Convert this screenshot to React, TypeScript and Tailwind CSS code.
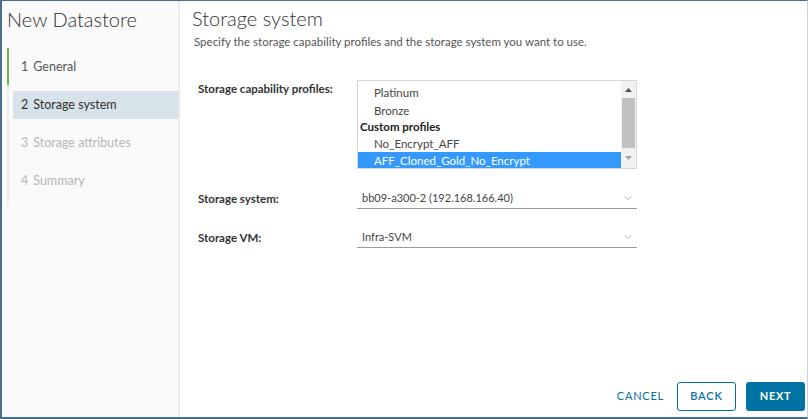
import { ChevronDown } from 'lucide-react';

const STEPS = [
  { n: 1, label: 'General', state: 'done' },
  { n: 2, label: 'Storage system', state: 'active' },
  { n: 3, label: 'Storage attributes', state: 'todo' },
  { n: 4, label: 'Summary', state: 'todo' },
];

function StepList() {
  return (
    <div className="mt-[16px] flex">
      <div className="ml-[5px] flex w-[2px] flex-col bg-[#ececec]">
        <div className="h-[37px] bg-[#6db33f]" />
        <div className="h-[111px]" />
      </div>
      <div className="ml-[4px] flex flex-1 flex-col pt-[5px]">
        {STEPS.map((s) => (
          <div
            key={s.n}
            className={
              s.state === 'active'
                ? 'mb-[10px] flex h-[28px] items-center bg-[#d8e3e9] pl-[8px] text-[#313131]'
                : s.state === 'done'
                  ? 'mb-[10px] flex h-[28px] items-center pl-[8px] text-[#565656]'
                  : 'mb-[10px] flex h-[28px] items-center pl-[8px] text-[#b6b6b6]'
            }
          >
            <span className="mr-[5px]">{s.n}</span>
            <span>{s.label}</span>
          </div>
        ))}
      </div>
    </div>
  );
}

function ProfilesList() {
  return (
    <div className="flex h-[89px] w-[280px] border border-[#d7d7d7] bg-white text-[11.5px]">
      <div className="flex flex-1 flex-col overflow-hidden">
        <div className="-mt-[14px] flex flex-col">
          <div className="h-[17px] pl-[16px] leading-[17px]">Gold</div>
          <div className="h-[18px] pl-[16px] leading-[18px]">Platinum</div>
          <div className="h-[17px] pl-[16px] leading-[17px]">Bronze</div>
          <div className="h-[16px] pl-[2px] font-bold leading-[16px] text-[#222]">Custom profiles</div>
          <div className="h-[17px] pl-[16px] leading-[17px]">No_Encrypt_AFF</div>
          <div className="h-[17px] bg-[#3399ff] pl-[16px] leading-[17px] text-white">
            AFF_Cloned_Gold_No_Encrypt
          </div>
        </div>
      </div>
      <div className="flex w-[15px] flex-col bg-[#f1f1f1]">
        <div className="flex h-[17px] items-center justify-center">
          <svg width="7" height="4" viewBox="0 0 7 4"><path d="M0 4 L3.5 0 L7 4Z" fill="#505050" /></svg>
        </div>
        <div className="mx-[1px] h-[50px] bg-[#c1c1c1]" />
        <div className="flex flex-1 items-center justify-center">
          <svg width="7" height="4" viewBox="0 0 7 4"><path d="M0 0 L3.5 4 L7 0Z" fill="#a3a3a3" /></svg>
        </div>
      </div>
    </div>
  );
}

function SelectRow({ label, value }: { label: string; value: string }) {
  return (
    <div className="flex items-center">
      <div className="w-[165px] pl-[6px] text-[11.5px] font-bold text-[#333]">{label}</div>
      <div className="flex h-[22px] w-[280px] items-center justify-between border-b border-[#9a9a9a] pl-[5px] pr-[3px] text-[#454545]">
        <span>{value}</span>
        <ChevronDown size={12} strokeWidth={1.5} className="text-[#9a9a9a]" />
      </div>
    </div>
  );
}

export default function App() {
  return (
    <div
      className="flex h-[419px] w-[808px] border-t border-b-2 border-l-2 border-r border-t-[#4d6d8e] border-b-[#4d6d8e] border-l-[#4d6d8e] border-r-[#c8d3dd] bg-white text-[11px] text-[#454545]"
      style={{ fontFamily: 'Lato, "Liberation Sans", sans-serif' }}
    >
      <aside className="flex w-[178px] flex-col border-r-2 border-[#eaeaea] bg-[#fafafa]">
        <h1 className="pl-[5px] pt-[5px] text-[20px] font-light leading-[26px] text-[#313131]">New Datastore</h1>
        <div className="text-[12.5px]">
          <StepList />
        </div>
      </aside>
      <main className="flex flex-1 flex-col pl-[12px]">
        <h2 className="pt-[5px] text-[20px] font-light leading-[24px] text-[#313131]">Storage system</h2>
        <p className="mt-[3px] pl-[2px] text-[11.5px] text-[#565656]">
          Specify the storage capability profiles and the storage system you want to use.
        </p>
        <div className="mt-[30px] flex">
          <div className="w-[165px] pl-[6px] text-[11.5px] font-bold text-[#333]">Storage capability profiles:</div>
          <ProfilesList />
        </div>
        <div className="mt-[18px] flex flex-col gap-[17px]">
          <SelectRow label="Storage system:" value="bb09-a300-2 (192.168.166.40)" />
          <SelectRow label="Storage VM:" value="Infra-SVM" />
        </div>
        <div className="mt-auto flex items-center justify-end gap-[10px] pb-[6px] pr-[2px]">
          <button className="pl-[6px] pr-[3px] text-[11px] tracking-[0.07em] text-[#0072a3]">CANCEL</button>
          <button className="h-[29px] w-[59px] rounded-[3px] border border-[#0072a3] text-[11px] font-semibold tracking-[0.08em] text-[#0072a3]">
            BACK
          </button>
          <button className="h-[29px] w-[59px] rounded-[3px] bg-[#0072a3] text-[11px] font-bold tracking-[0.06em] text-white">
            NEXT
          </button>
        </div>
      </main>
    </div>
  );
}
